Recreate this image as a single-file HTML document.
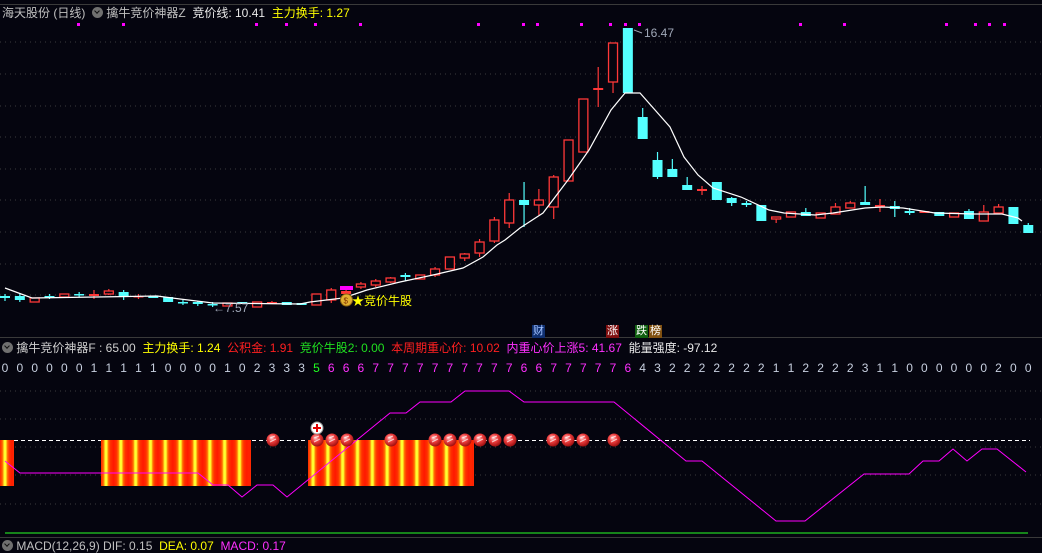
<!DOCTYPE html>
<html><head><meta charset="utf-8">
<style>
*{margin:0;padding:0;box-sizing:border-box}
body{width:1042px;height:544px;background:#05050f;overflow:hidden;position:relative;font-family:"Liberation Sans","Noto Sans CJK SC",sans-serif;font-size:12px}
.t{position:absolute;white-space:nowrap;line-height:14px}
.ico{display:inline-block;width:11px;height:11px;border-radius:50%;background:#707070;vertical-align:-1px;position:relative}
.ico:after{content:"";position:absolute;left:3px;top:2px;width:3px;height:3px;border-right:1.5px solid #111;border-bottom:1.5px solid #111;transform:rotate(45deg)}
#nums{position:absolute;left:-2.4px;top:361px;display:flex;color:#c8d0e0;font-size:12px}
#nums span{width:14.83px;text-align:center}
.m{color:#ff30ff}.g{color:#20ff20}
.tag{position:absolute;top:325px;width:13px;height:13px;font-size:11px;line-height:13px;text-align:center;color:#fff}
.bar{position:absolute;top:440px;height:46px;background:repeating-linear-gradient(90deg,#ff1800 0px,#ff3000 3px,#ff7000 5px,#ffff30 6.6px,#ffff30 8.2px,#ff7000 9.8px,#ff3000 11.8px,#ff1800 14.83px)}
</style></head><body>
<svg id="s" width="1042" height="544" style="position:absolute;left:0;top:0">
<line x1="0" y1="4.5" x2="1042" y2="4.5" stroke="#3a3a3a"/>
<g stroke="#3c3c3c" stroke-dasharray="1,4">
<line x1="0" y1="42" x2="1042" y2="42"/><line x1="0" y1="74" x2="1042" y2="74"/><line x1="0" y1="106" x2="1042" y2="106"/><line x1="0" y1="137" x2="1042" y2="137"/><line x1="0" y1="169" x2="1042" y2="169"/><line x1="0" y1="200" x2="1042" y2="200"/><line x1="0" y1="232" x2="1042" y2="232"/><line x1="0" y1="264" x2="1042" y2="264"/><line x1="0" y1="295" x2="1042" y2="295"/>
<line x1="0" y1="391" x2="1042" y2="391"/><line x1="0" y1="419" x2="1042" y2="419"/><line x1="0" y1="447" x2="1042" y2="447"/><line x1="0" y1="475" x2="1042" y2="475"/><line x1="0" y1="504" x2="1042" y2="504"/>
</g>
<line x1="0" y1="337.5" x2="1042" y2="337.5" stroke="#3a3a3a"/>
<line x1="0" y1="537.5" x2="1042" y2="537.5" stroke="#3a3a3a"/>
<g fill="#ff00ff">
<rect x="77" y="23" width="3" height="3"/><rect x="122" y="23" width="3" height="3"/><rect x="255" y="23" width="3" height="3"/><rect x="285" y="23" width="3" height="3"/><rect x="314" y="23" width="3" height="3"/><rect x="359" y="23" width="3" height="3"/><rect x="477" y="23" width="3" height="3"/><rect x="522" y="23" width="3" height="3"/><rect x="536" y="23" width="3" height="3"/><rect x="580" y="23" width="3" height="3"/><rect x="609" y="23" width="3" height="3"/><rect x="624" y="23" width="3" height="3"/><rect x="638" y="23" width="3" height="3"/><rect x="799" y="23" width="3" height="3"/><rect x="843" y="23" width="3" height="3"/><rect x="945" y="23" width="3" height="3"/><rect x="974" y="23" width="3" height="3"/><rect x="988" y="23" width="3" height="3"/><rect x="1003" y="23" width="3" height="3"/>
</g>
<g id="candles"></g>
<polyline fill="none" stroke="#ffffff" stroke-width="1.2" points="5,288 32,298 157,296 180,299 213,303 300,304 310,302 343,298 367,290 400,282 433,275 463,268 483,257 497,245 505,240 520,228 543,213 568,180 589,150 611,110 625,93 640,93 670,127 684,157 698,175 713,188 741,197 769,210 784,213 815,215 833,213 865,208 882,207 903,208 935,213 974,214 1002,214 1018,218 1022,221"/>
<rect x="340" y="286" width="13" height="4" fill="#ff00ff"/>
<circle cx="346.5" cy="300" r="6" fill="#e0b030" stroke="#8a6010"/>
<text x="343.5" y="303.5" font-size="8" fill="#803000" font-family="Liberation Sans">$</text>
<text x="644" y="37" font-size="12" fill="#a0a8b8" font-family="Liberation Sans">16.47</text>
<line x1="634" y1="30" x2="642" y2="33" stroke="#a0a8b8"/>
<line x1="0" y1="440.5" x2="1030" y2="440.5" stroke="#ffffff" stroke-dasharray="4,3"/>
<line x1="5" y1="533" x2="1028" y2="533" stroke="#20d020" stroke-width="1.2"/>
</svg>
<div class="bar" style="left:0;width:14px;background-position:-2.4px 0"></div>
<div class="bar" style="left:101px;width:150px;background-position:-2.4px 0"></div>
<div class="bar" style="left:308px;width:166px;background-position:-2.4px 0"></div>
<svg width="1042" height="544" style="position:absolute;left:0;top:0">
<defs><radialGradient id="bg" cx="0.4" cy="0.35" r="0.65"><stop offset="0" stop-color="#ffd0d0"/><stop offset="0.45" stop-color="#f04040"/><stop offset="1" stop-color="#a01010"/></radialGradient></defs>
<polyline fill="none" stroke="#ff00ff" stroke-width="1" points="5,461 20,473 198,473 213,485 228,485 242,497 257,485 273,485 287,497 390,413 406,413 420,402 451,402 465,391 509,391 524,402 614,402 686,461 702,461 776,521 805,521 864,474 909,474 923,461 939,461 953,449 967,461 982,449 997,449 1026,472"/>
<g id="balls"></g>
<circle cx="317" cy="428" r="6" fill="#fff" stroke="#999"/>
<path d="M317 424v8M313 428h8" stroke="#e00000" stroke-width="2"/>
</svg>
<div class="t" style="left:2px;top:6px;color:#c0c0c0">海天股份 (日线) &nbsp;<span class="ico"></span> 擒牛竞价神器Z &nbsp;<span style="color:#e8e8e8">竞价线: 10.41</span> &nbsp;<span style="color:#ffff00">主力换手: 1.27</span></div>
<div class="t" style="left:213px;top:301px;color:#a0a8b8">←7.57</div>
<div class="t" style="left:352px;top:294px;color:#ffff00">★竞价牛股</div>
<div class="tag" style="left:532px;background:#103070;color:#a0c0ff">财</div>
<div class="tag" style="left:606px;background:#801010">涨</div>
<div class="tag" style="left:635px;background:#106010">跌</div>
<div class="tag" style="left:649px;background:#805010">榜</div>
<div class="t" style="left:2px;top:341px;color:#d0d0d0"><span class="ico"></span> 擒牛竞价神器F : 65.00 &nbsp;<span style="color:#ffff00">主力换手: 1.24</span> &nbsp;<span style="color:#ff2020">公积金: 1.91</span> &nbsp;<span style="color:#20e020">竞价牛股2: 0.00</span> &nbsp;<span style="color:#ff2020">本周期重心价: 10.02</span> &nbsp;<span style="color:#ff30ff">内重心价上涨5: 41.67</span> &nbsp;<span style="color:#e8e8e8">能量强度: -97.12</span></div>
<div id="nums"><span>0</span><span>0</span><span>0</span><span>0</span><span>0</span><span>0</span><span>1</span><span>1</span><span>1</span><span>1</span><span>1</span><span>0</span><span>0</span><span>0</span><span>0</span><span>1</span><span>0</span><span>2</span><span>3</span><span>3</span><span>3</span><span class="g">5</span><span class="m">6</span><span class="m">6</span><span class="m">6</span><span class="m">7</span><span class="m">7</span><span class="m">7</span><span class="m">7</span><span class="m">7</span><span class="m">7</span><span class="m">7</span><span class="m">7</span><span class="m">7</span><span class="m">7</span><span class="m">6</span><span class="m">6</span><span class="m">7</span><span class="m">7</span><span class="m">7</span><span class="m">7</span><span class="m">7</span><span class="m">6</span><span>4</span><span>3</span><span>2</span><span>2</span><span>2</span><span>2</span><span>2</span><span>2</span><span>2</span><span>1</span><span>1</span><span>2</span><span>2</span><span>2</span><span>2</span><span>3</span><span>1</span><span>1</span><span>0</span><span>0</span><span>0</span><span>0</span><span>0</span><span>0</span><span>2</span><span>0</span><span>0</span></div>
<div class="t" style="left:2px;top:539px;color:#c0c0c0"><span class="ico"></span> MACD(12,26,9) DIF: 0.15 &nbsp;<span style="color:#ffff00">DEA: 0.07</span> &nbsp;<span style="color:#ff30ff">MACD: 0.17</span></div>
<script>
var d=[['c',296,298,294,301],['c',296,300,293,302],['r',298,302],['c',296,297,294,299],['r',294,297],['c',294,295,292,297],['R',294,296,290,299],['r',291,294,289,295],['c',292,297,290,300],['R',296,297,294,299],['c',296,298],['c',297,302],['c',302,303,300,305],['c',302,304,301,306],['c',304,305,302,307],['r',303,306],['c',302,304],['r',302,307],['R',302,303,301,304],['c',302,305],['c',303,305],['r',294,305],['r',290,300,288,303],['R',291,294,287,296],['r',284,287,282,289],['r',281,285,279,287],['r',278,282,277,283],['c',275,277,273,281],['r',275,279],['r',269,275,267,277],['r',257,269],['r',254,258,253,261],['r',242,253,239,257],['r',220,241,217,243],
['r',200,223,193,228],['c',200,205,182,227],['r',200,205,189,215],['r',177,207,175,219],['r',140,181],['r',99,152],['R',88,90,67,107],['r',43,82,43,93],['c',28,93],['c',117,139,108,139],['c',160,177,152,179],['c',169,177,159,177],['c',185,190,177,190],['R',189,191,186,195],['c',182,200],['c',198,203,197,206],['c',203,205,201,207],['c',205,221],['r',217,219,217,223],['r',212,217],['c',212,216,208,216],['r',213,218],['r',207,214,203,214],['r',203,208,201,208],['c',202,205,186,205],['R',205,207,199,212],['c',206,209,201,217],['c',211,213,208,215],['R',211,213],['c',212,216],['r',213,217],['c',211,219,209,219],['r',212,221,205,221],['r',207,213,204,213],['c',207,224],['c',225,233,223,233]];
var g=document.getElementById('candles'),h='';
d.forEach(function(c,i){var x=5+14.83*i,t=c[1],b=c[2],wt=c[3]||t,wb=c[4]||b;
var col=c[0]=='c'?'#54ffff':'#ff3838';
h+='<line x1="'+x+'" y1="'+wt+'" x2="'+x+'" y2="'+wb+'" stroke="'+col+'" stroke-width="1.2"/>';
if(c[0]=='r')h+='<rect x="'+(x-4.5)+'" y="'+t+'" width="9" height="'+Math.max(1,b-t)+'" fill="#05050f" stroke="'+col+'" stroke-width="1.3"/>';
else h+='<rect x="'+(x-5)+'" y="'+t+'" width="10" height="'+Math.max(1.5,b-t)+'" fill="'+col+'"/>';});
g.innerHTML=h;
var bx=[273,317,332,347,391,435,450,465,480,495,510,553,568,583,614],bh='';
bx.forEach(function(x){bh+='<circle cx="'+x+'" cy="440" r="6.5" fill="url(#bg)"/><path d="M'+(x-3)+' 438l5-2M'+(x-3)+' 442l6-3" stroke="#fff" stroke-opacity="0.7" stroke-width="1"/>';});
document.getElementById('balls').innerHTML=bh;
</script>
</body></html>
